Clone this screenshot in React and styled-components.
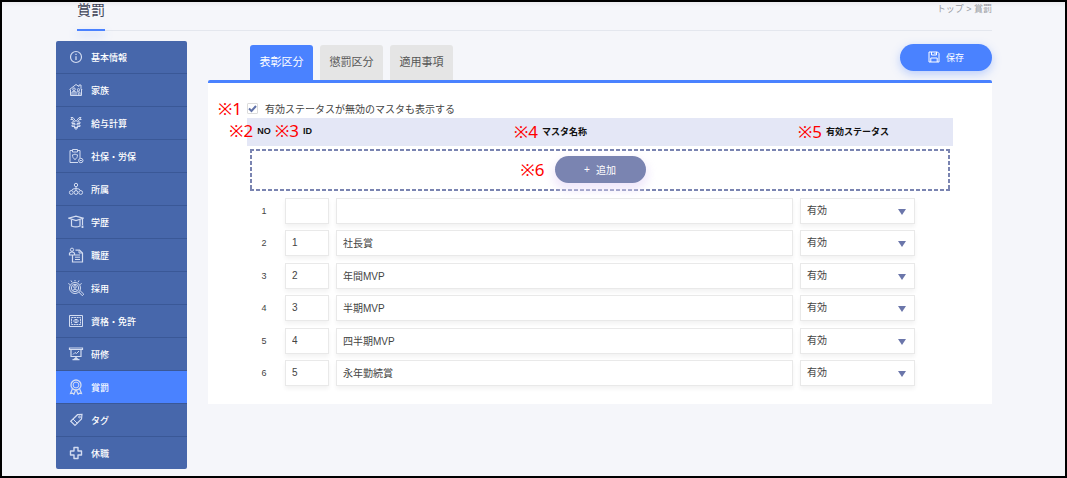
import React, { useState } from 'react';
import styled, { createGlobalStyle, css } from 'styled-components';

const GlobalStyle = createGlobalStyle`
  * {
    box-sizing: border-box;
  }
  body {
    margin: 0;
    background: #f5f6fa;
    color: #444;
    font-family: "Liberation Sans", "Noto Sans CJK JP", sans-serif;
    font-size: 10px;
  }
  button, input, select {
    font-family: inherit;
    color: inherit;
  }
`

const Page = styled.div`
  min-height: 100vh;
  border: 2px solid #000;
  padding: 0 73px 6px 54px;
  background: linear-gradient(#ececf0, #f5f6fa 5px);
`

const Header = styled.header`
  position: relative;
  z-index: 1;
  display: flex;
  justify-content: space-between;
  height: 29px;
  margin-left: 21px;
  border-bottom: 1px solid #e4e7ee;

  &::after {
    content: "";
    position: absolute;
    left: 0;
    bottom: -1px;
    width: 28px;
    height: 2px;
    background: #4a82ff;
    box-shadow: 0 4px 10px rgba(74, 130, 255, 0.4);
  }
`

const Title = styled.h1`
  margin: 0;
  font-size: 14px;
  font-weight: 400;
  line-height: 16px;
  color: #3d4256;
`

const Breadcrumb = styled.nav`
  font-size: 9px;
  line-height: 14px;
  color: #9a9ca3;

  a {
    color: inherit;
    text-decoration: none;
  }
`

const Body = styled.div`
  display: flex;
  align-items: flex-start;
  gap: 21px;
  margin-top: 10px;
`

const Sidebar = styled.nav`
  flex: 0 0 131px;
  border-radius: 2px;
  overflow: hidden;
  background: #4767ab;
`

const MenuItem = styled.a`
  display: flex;
  align-items: center;
  gap: 7px;
  height: 33px;
  padding: 0 12px;
  border-bottom: 1px solid #3a5897;
  font-size: 9px;
  font-weight: 500;
  color: #fff;
  text-decoration: none;

  &:last-child {
    height: 32px;
    border-bottom: none;
  }
  ${({ $active }) => $active && css`
    background: #4a82ff;
  `}
`

const MenuIcon = styled.svg`
  flex: none;
  width: 16px;
  height: 16px;
  fill: none;
  stroke: #d3dcf1;
  stroke-width: 1;
`

const Main = styled.main`
  flex: 1;
  min-width: 0;
`

const TabBar = styled.div`
  display: flex;
  justify-content: space-between;
  align-items: flex-end;
  height: 39px;
  padding-left: 42px;
`

const Tabs = styled.div`
  display: flex;
  gap: 7px;
`

const Tab = styled.button`
  width: 63px;
  height: 35px;
  padding: 0 0 3px;
  border: none;
  border-radius: 3px 3px 0 0;
  background: ${({ $active }) => ($active ? '#4a82ff' : '#e5e5e5')};
  color: ${({ $active }) => ($active ? '#fff' : '#555')};
  font-size: 11px;
  cursor: pointer;
`

const PillButton = styled.button`
  display: flex;
  align-items: center;
  justify-content: center;
  gap: 6px;
  height: 27px;
  padding: 0 0 1px;
  border: none;
  border-radius: 14px;
  color: #fff;
  cursor: pointer;
`

const SaveButton = styled(PillButton)`
  align-self: flex-start;
  width: 92px;
  margin-top: 3px;
  background: #4a82ff;
  box-shadow: 0 3px 10px rgba(74, 130, 255, 0.35);
  font-size: 9px;
`

const AddButton = styled(PillButton)`
  width: 91px;
  background: #7a84b1;
  box-shadow: 0 5px 10px 2px rgba(235, 225, 250, 0.8);
  font-size: 10px;
`

const Panel = styled.section`
  padding: 19px 39px 11px;
  border-top: 3px solid #4a82ff;
  border-radius: 2px 2px 0 0;
  background: #fff;
`

const CheckRow = styled.label`
  position: relative;
  display: flex;
  align-items: center;
  gap: 7px;
  width: fit-content;
  height: 13px;
  margin-bottom: 3px;
  color: #444;
`

const Checkbox = styled.input`
  appearance: none;
  width: 11px;
  height: 11px;
  margin: 0;
  border: 1px solid #dcdcdc;
  border-radius: 1px;
  background: #fff;
`

const CheckMark = styled.svg`
  position: absolute;
  left: 1px;
  top: 2px;
  width: 9px;
  height: 9px;
  fill: none;
  stroke: #6172a8;
  stroke-width: 2;
  pointer-events: none;
`

const Table = styled.table`
  width: 100%;
  table-layout: fixed;
  border-collapse: collapse;

  td, th {
    padding: 0;
  }
`

const HeadCell = styled.th`
  width: ${({ $width }) => $width || 'auto'};
  height: 28px;
  background: #e4e7f6;
  font-size: 9px;
  color: #111;
  text-align: ${({ $align }) => $align || 'center'};

  && {
    padding-bottom: 2px;
    padding-left: ${({ $left }) => $left || 0}px;
    padding-right: ${({ $right }) => $right || 0}px;
  }
`

const Anchor = styled.span`
  position: relative;
`

// red reference marks laid over the screen
const Note = styled.span`
  position: absolute;
  right: 100%;
  top: 50%;
  margin-right: ${({ $gap }) => $gap || 4}px;
  transform: translateY(-50%);
  font-family: "Noto Sans", "Noto Sans CJK JP", sans-serif;
  font-size: 17px;
  font-weight: 400;
  line-height: 20px;
  white-space: nowrap;
  color: #f00;
`

const dash = '#7a84b1 0 4px, transparent 4px 6px';

const AddArea = styled.div`
  display: flex;
  justify-content: center;
  align-items: center;
  height: 42px;
  margin: 3px 3px 7px;
  padding-bottom: 1px;
  background:
    repeating-linear-gradient(90deg, ${dash}) top / 100% 2px no-repeat,
    repeating-linear-gradient(90deg, ${dash}) bottom / 100% 2px no-repeat,
    repeating-linear-gradient(${dash}) left / 2px 100% no-repeat,
    repeating-linear-gradient(${dash}) right / 2px 100% no-repeat;
`

const Row = styled.tr`
  height: 32px;
  vertical-align: top;

  &:nth-child(odd) {
    height: 33px;
  }
`

const NoCell = styled.td`
  font-size: 9px;
  line-height: 26px;
  text-align: center;

  && {
    padding-right: 4px;
  }
`

const FieldCell = styled.td`
  && {
    padding-right: ${({ $right }) => $right || 7}px;
  }
`

const fieldStyle = css`
  display: block;
  width: 100%;
  height: 26px;
  padding: 0 6px 2px;
  border: 1px solid #e9e9e9;
  border-radius: 0;
  background: #fff;
  box-shadow: 0 3px 4px rgba(0, 0, 0, 0.05);
  font-size: 10px;
`

const TextField = styled.input`
  ${fieldStyle}
`

const SelectWrap = styled.div`
  position: relative;
`

const Select = styled.select`
  ${fieldStyle}
  appearance: none;
`

const Arrow = styled.svg`
  position: absolute;
  right: 9px;
  top: 11px;
  width: 8px;
  height: 6px;
  fill: #6b76aa;
  pointer-events: none;
`

const icons = {
  info: (
    <>
      <circle cx="8" cy="8" r="5.5" strokeWidth="1.2" />
      <path d="M8 7.2v3.8M8 4.8v1.2" strokeWidth="1.3" />
    </>
  ),
  family: (
    <>
      <path d="M1.5 7.5 8 2.5l3 2V3h2v3.5l1 1.2M2.5 7.5v6h11V7" />
      <circle cx="6" cy="7.2" r="1.3" />
      <circle cx="10.5" cy="7.8" r="1.2" />
      <path d="M4 13.5V10q2-1.7 4 0v3.5M8.5 10q2-1 3.5.4v3M6 10v3.5M10.3 10.5v3" />
    </>
  ),
  pay: (
    <>
      <path d="M3 2.5 6.5 7H4v1.5h3V10H4v1.5h3V14h2v-2.500h3V10H9V8.500h3V7H9.500L13 2.500l-2 .2L8 6.500l-3-4z" />
      <path d="M2.500 4.500h2M11.500 4.500h2M6 12.500h4" />
    </>
  ),
  insurance: (
    <>
      <path d="M10 14.500H2V2.500h2.500M9.500 2.500H12V10" />
      <path d="M4.500 1.500h5v2.500h-5z" />
      <path d="M7 6c.8.600 1.700.8 2.500.8 0 2.400-.8 3.700-2.500 4.700-1.700-1-2.500-2.300-2.500-4.700.8 0 1.700-.2 2.500-.8z" />
      <circle cx="12.800" cy="12.500" r="2.200" />
      <path d="M11.800 12.500h2" />
    </>
  ),
  org: (
    <>
      <circle cx="8" cy="4" r="1.700" />
      <circle cx="3.300" cy="11.500" r="1.900" />
      <circle cx="8" cy="11.500" r="1.900" />
      <circle cx="12.700" cy="11.500" r="1.900" />
      <path d="M8 5.600v4.200M3.300 9.800Q4 7.500 8 7.500t4.700 2.300" />
    </>
  ),
  school: (
    <>
      <path d="M1 4.200 8 2.200l7 2L8 6.500z" strokeWidth="1.200" />
      <path d="M3.500 5.500v6.500q4.500 1.800 8.500 0V5.500M14.500 4.500v6.500" strokeWidth="1.200" />
      <path d="M14.500 11.500v2.500" strokeWidth="1.800" />
    </>
  ),
  career: (
    <>
      <circle cx="4" cy="2.700" r="1.600" />
      <path d="M1.500 8V6.200q2.500-2.700 5 0V8zM7.500 3.200h4L14.500 6v9h-10V8.500" strokeWidth="1.200" />
      <path d="M11 3.500V6h3M7 8h5M7 10.200h5M7 12.500h5" />
    </>
  ),
  recruit: (
    <>
      <circle cx="7" cy="8" r="5.500" />
      <circle cx="7" cy="8" r="3.700" />
      <circle cx="7" cy="6.900" r="1.300" />
      <path d="M4.800 10.400q2.200-2.800 4.400 0" />
      <path d="m10.800 12 3.500 3.700 1.500-1.500-3.700-3.500M7 -.5v1.800M3 .5l1 1.700M11 .5l-1 1.700M.3 3.500l1.600 1M13.700 3.500l-1.600 1" />
    </>
  ),
  license: (
    <>
      <path d="M1.500 2.500h13v11h-13z" />
      <path d="M3.500 4.500h9v7h-9z" strokeDasharray="2 .6" />
      <path d="M5 8h6M6.500 6.500h3M6.500 9.500h3" />
    </>
  ),
  training: (
    <>
      <path d="M1.500 2h13v1.500h-13zM3 3.500v7h10v-7M8 10.500v3M4.500 13.700h7M6 13.500l2-2 2 2" strokeWidth="1.200" />
      <path d="m5 8.500 2-2 1.500 1 2.500-2.500" />
    </>
  ),
  award: (
    <>
      <circle cx="8" cy="6" r="5" strokeWidth="1.300" />
      <circle cx="8" cy="6" r="2.900" />
      <path d="m4.500 9.500-2 5 2.200-.4 1.200 1.200L7.700 11M11.500 9.500l2 5-2.200-.4-1.200 1.200L8.300 11" strokeWidth="1.200" />
    </>
  ),
  tag: (
    <>
      <path d="M9.500 2.700 14 2.500l-.5 4.500L7 13.500 2.700 9.200z" strokeWidth="1.200" />
      <path d="m5 7 4.500 4.500" />
      <circle cx="11.500" cy="5" r=".9" />
    </>
  ),
  leave: (
    <path d="M6 2.500h4V6h3.500v4H10v3.500H6V10H2.500V6H6z" strokeWidth="1.400" strokeLinejoin="round" />
  ),
}

const menu = [
  { icon: 'info', label: '基本情報' },
  { icon: 'family', label: '家族' },
  { icon: 'pay', label: '給与計算' },
  { icon: 'insurance', label: '社保・労保' },
  { icon: 'org', label: '所属' },
  { icon: 'school', label: '学歴' },
  { icon: 'career', label: '職歴' },
  { icon: 'recruit', label: '採用' },
  { icon: 'license', label: '資格・免許' },
  { icon: 'training', label: '研修' },
  { icon: 'award', label: '賞罰' },
  { icon: 'tag', label: 'タグ' },
  { icon: 'leave', label: '休職' },
]

const tabs = ['表彰区分', '懲罰区分', '適用事項']

const rows = [
  { id: '', name: '' },
  { id: '1', name: '社長賞' },
  { id: '2', name: '年間MVP' },
  { id: '3', name: '半期MVP' },
  { id: '4', name: '四半期MVP' },
  { id: '5', name: '永年勤続賞' },
]

const SaveIcon = () => (
  <svg width="12" height="12" viewBox="0 0 12 12" fill="none" stroke="#fff">
    <path d="M1 1h8.500L11 2.500V11H1zM3.500 1v3h5V1M2.800 11V7h6.400v4M7 2v1" />
  </svg>
)

export default function App() {
  const [tab, setTab] = useState(0);
  const [showInactive, setShowInactive] = useState(true);

  return (
    <>
      <GlobalStyle />
      <Page>
        <Header>
          <Title>賞罰</Title>
          <Breadcrumb><a href="#top">トップ</a> &gt; 賞罰</Breadcrumb>
        </Header>
        <Body>
          <Sidebar>
            {menu.map(({ icon, label }) => (
              <MenuItem key={icon} href={`#${icon}`} $active={icon === 'award'}>
                <MenuIcon viewBox="0 0 16 16">{icons[icon]}</MenuIcon>
                {label}
              </MenuItem>
            ))}
          </Sidebar>
          <Main>
            <TabBar>
              <Tabs>
                {tabs.map((label, i) => (
                  <Tab key={label} type="button" $active={i === tab} onClick={() => setTab(i)}>{label}</Tab>
                ))}
              </Tabs>
              <SaveButton type="button"><SaveIcon />保存</SaveButton>
            </TabBar>
            <Panel>
              <CheckRow>
                <Note $gap={5}>※1</Note>
                <Checkbox type="checkbox" checked={showInactive} onChange={(e) => setShowInactive(e.target.checked)} />
                {showInactive && <CheckMark viewBox="0 0 9 9"><path d="m1 4.500 2.500 2.500L8 2" /></CheckMark>}
                有効ステータスが無効のマスタも表示する
              </CheckRow>
              <Table>
                <thead>
                  <tr>
                    <HeadCell $width="38px" $right={4}><Anchor><Note>※2</Note>NO</Anchor></HeadCell>
                    <HeadCell $width="51px" $align="left" $left={18}><Anchor><Note>※3</Note>ID</Anchor></HeadCell>
                    <HeadCell $right={7}><Anchor><Note>※4</Note>マスタ名称</Anchor></HeadCell>
                    <HeadCell $width="153px" $right={38}><Anchor><Note>※5</Note>有効ステータス</Anchor></HeadCell>
                  </tr>
                </thead>
                <tbody>
                  <tr>
                    <td colSpan={4}>
                      <AddArea>
                        <Anchor>
                          <Note $gap={10}>※6</Note>
                          <AddButton type="button"><span>+</span>追加</AddButton>
                        </Anchor>
                      </AddArea>
                    </td>
                  </tr>
                  {rows.map((row, i) => (
                    <Row key={i}>
                      <NoCell>{i + 1}</NoCell>
                      <FieldCell><TextField aria-label="ID" defaultValue={row.id} /></FieldCell>
                      <FieldCell><TextField aria-label="マスタ名称" defaultValue={row.name} /></FieldCell>
                      <FieldCell $right={38}>
                        <SelectWrap>
                          <Select aria-label="有効ステータス" defaultValue="有効">
                            <option>有効</option>
                            <option>無効</option>
                          </Select>
                          <Arrow viewBox="0 0 8 6"><path d="M0 0h8L4 6z" /></Arrow>
                        </SelectWrap>
                      </FieldCell>
                    </Row>
                  ))}
                </tbody>
              </Table>
            </Panel>
          </Main>
        </Body>
      </Page>
    </>
  )
}
